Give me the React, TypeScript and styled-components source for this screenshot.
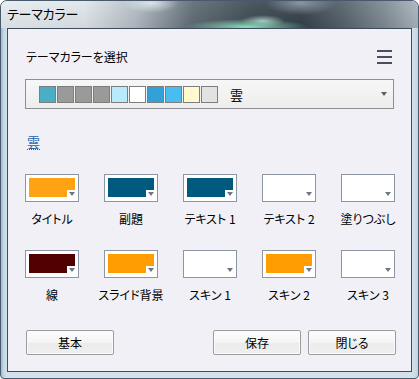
import React from 'react';
import styled, { createGlobalStyle } from 'styled-components';

const GlobalStyle = createGlobalStyle`
  html, body {
    margin: 0;
    padding: 0;
    background: #ffffff;
  }
  body {
    font-family: "Noto Sans CJK JP", "Noto Sans", sans-serif;
    font-feature-settings: "palt";
    color: #000;
  }
`;

const Window = styled.div`
  width: 419px;
  height: 379px;
  box-sizing: border-box;
  border: 1px solid #4a5a6c;
  border-radius: 7px 7px 4px 4px;
  overflow: hidden;
  display: flex;
  flex-direction: column;
  background: linear-gradient(90deg, #9fbcd4 0, #c6d8e6 3px, #d4e1eb 6px, #d4e1eb calc(100% - 6px), #c3d5e3 100%);
`;

const TitleBar = styled.div`
  height: 27px;
  flex: none;
  display: flex;
  align-items: center;
  padding: 0 0 3px 6px;
  box-sizing: border-box;
  font-size: 13px;
  letter-spacing: -0.2px;
  background:
    radial-gradient(ellipse 62px 8px at 246px 26px, rgba(140, 222, 186, 1), rgba(140, 222, 186, 0) 100%),
    radial-gradient(ellipse 22px 6px at 262px 20px, rgba(190, 230, 215, 0.8), rgba(190, 230, 215, 0) 100%),
    radial-gradient(ellipse 28px 10px at 150px 2px, rgba(232, 240, 244, 0.8), rgba(232, 240, 244, 0) 100%),
    radial-gradient(ellipse 36px 12px at 300px 2px, rgba(160, 175, 188, 0.75), rgba(160, 175, 188, 0) 100%),
    linear-gradient(180deg, rgba(255, 255, 255, 0.08), rgba(0, 0, 0, 0.06)),
    linear-gradient(90deg, #e6ecef 0%, #dfe6ea 20%, #b5bec5 32%, #5f6b75 46%, #3e4a54 60%, #34404a 72%, #55616b 82%, #7f8a93 92%, #aab4bc 100%);
`;

const Client = styled.div`
  margin: 0 6px;
  height: 344px;
  box-sizing: border-box;
  border: 1px solid #3e4d5d;
  background: #f0f0f6;
  padding: 19px 17px 0 17px;
  display: flex;
  flex-direction: column;
`;

const Header = styled.div`
  height: 18px;
  display: flex;
  align-items: center;
  justify-content: space-between;
`;

const Label = styled.span`
  font-size: 12px;
  line-height: 18px;
  padding-left: 1px;
`;

const Menu = styled.div`
  width: 15px;
  height: 14px;
  margin-right: 2px;
  display: flex;
  flex-direction: column;
  justify-content: space-between;
  & > i {
    display: block;
    height: 2px;
    background: #4b4f5c;
  }
`;

const Combo = styled.div`
  margin-top: 13px;
  height: 30px;
  box-sizing: border-box;
  border: 1px solid #8e8f90;
  background: linear-gradient(#f7f7f8, #ededee);
  display: flex;
  align-items: center;
  padding: 0 6px 0 13px;
`;

const Swatches = styled.div`
  display: flex;
  gap: 1px;
`;

const Swatch = styled.span<{ $c: string }>`
  width: 17px;
  height: 17px;
  box-sizing: border-box;
  border: 1px solid #7d7d7d;
  background: ${({ $c }) => $c};
`;

const ComboText = styled.span`
  margin-left: 12px;
  font-size: 13px;
  flex: 1;
`;

const SmallArrow = styled.span`
  width: 0;
  height: 0;
  border-left: 3.5px solid transparent;
  border-right: 3.5px solid transparent;
  border-top: 4px solid #5a5e66;
`;

const Link = styled.div`
  margin-top: 26px;
  height: 16px;
  display: flex;
  align-items: flex-start;
  padding-left: 2px;
  & > span {
    font-size: 13px;
    line-height: 14px;
    color: #1f5fae;
    border-bottom: 1px dotted #1f5fae;
  }
`;

const Grid = styled.div`
  margin-top: 23px;
  display: grid;
  grid-template-columns: repeat(5, 54px);
  column-gap: 25px;
  row-gap: 23px;
`;

const Cell = styled.div`
  display: flex;
  flex-direction: column;
  align-items: center;
`;

const ColorButton = styled.div`
  position: relative;
  width: 54px;
  height: 28px;
  box-sizing: border-box;
  border: 1px solid #8d95a2;
  background: #ffffff;
  padding: 3px 3px 4px 3px;
  align-self: stretch;
`;

const Fill = styled.div<{ $c: string }>`
  width: 100%;
  height: 100%;
  background: ${({ $c }) => $c};
  clip-path: polygon(0 0, 100% 0, 100% calc(100% - 7px), calc(100% - 8px) calc(100% - 7px), calc(100% - 8px) 100%, 0 100%);
`;

const ButtonArrow = styled.span`
  position: absolute;
  right: 3px;
  bottom: 5px;
  width: 0;
  height: 0;
  border-left: 3.5px solid transparent;
  border-right: 3.5px solid transparent;
  border-top: 4px solid #6e7684;
`;

const CellLabel = styled.span`
  margin-top: 9px;
  font-size: 12px;
  line-height: 16px;
  white-space: nowrap;
`;

const Footer = styled.div`
  margin-top: 27px;
  display: flex;
  justify-content: space-between;
  padding: 0 0 0 1px;
  margin-right: -2px;
`;

const Group = styled.div`
  display: flex;
  gap: 7px;
`;

const Button = styled.button`
  width: 88px;
  height: 25px;
  box-sizing: border-box;
  border: 1px solid #9c9c9c;
  border-radius: 2px;
  background: linear-gradient(#fdfdfd, #f4f4f4 50%, #ebebeb 51%, #efefef);
  box-shadow: inset 0 0 0 1px #fbfbfb;
  font-family: inherit;
  font-feature-settings: "palt";
  font-size: 12px;
  color: #000;
  padding: 0;
`;

const paletteColors = ['#4aaec8', '#9a9a9a', '#9a9a9a', '#9a9a9a', '#b8eafc', '#ffffff', '#33a0d8', '#48bdf2', '#fffbce', '#e2e2e2'];

const slots = [
  { label: 'タイトル', color: '#ffa214' },
  { label: '副題', color: '#005a7e' },
  { label: 'テキスト 1', color: '#005a7e' },
  { label: 'テキスト 2', color: '#ffffff' },
  { label: '塗りつぶし', color: '#ffffff' },
  { label: '線', color: '#500000' },
  { label: 'スライド背景', color: '#ff9c00' },
  { label: 'スキン 1', color: '#ffffff' },
  { label: 'スキン 2', color: '#ff9c00' },
  { label: 'スキン 3', color: '#ffffff' },
];

export default function App() {
  return (
    <>
      <GlobalStyle />
      <Window>
        <TitleBar>テーマカラー</TitleBar>
        <Client>
          <Header>
            <Label>テーマカラーを選択</Label>
            <Menu>
              <i />
              <i />
              <i />
            </Menu>
          </Header>
          <Combo>
            <Swatches>
              {paletteColors.map((c, i) => (
                <Swatch key={i} $c={c} />
              ))}
            </Swatches>
            <ComboText>雲</ComboText>
            <SmallArrow />
          </Combo>
          <Link>
            <span>雲</span>
          </Link>
          <Grid>
            {slots.map((s) => (
              <Cell key={s.label}>
                <ColorButton>
                  <Fill $c={s.color} />
                  <ButtonArrow />
                </ColorButton>
                <CellLabel>{s.label}</CellLabel>
              </Cell>
            ))}
          </Grid>
          <Footer>
            <Button>基本</Button>
            <Group>
              <Button>保存</Button>
              <Button>閉じる</Button>
            </Group>
          </Footer>
        </Client>
      </Window>
    </>
  );
}
